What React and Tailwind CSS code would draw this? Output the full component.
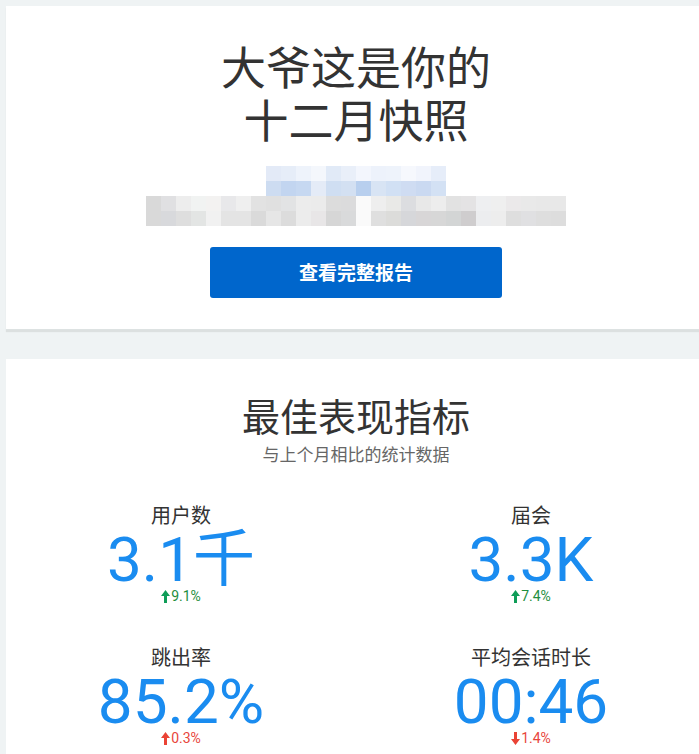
import React from 'react';

const row1a = ['#e3eaf7', '#e6edf8', '#eef3fb', '#f4f7fc', '#e1eaf7', '#e9eff9', '#f3f6fd', '#edf2fb', '#eef3fb', '#f6f8fd', '#f1f4fc', '#e6edf9'];
const row1b = ['#cddcf1', '#c2d5f0', '#c6d8f1', '#e4ebf7', '#cfdef2', '#d3e0f2', '#b8cfee', '#d8e4f4', '#d1e0f4', '#cfdcf2', '#cad9f1', '#d3e1f4'];
const row2a = ['#d9d9d9', '#e0e0e2', '#ededed', '#f1f3f2', '#f3f2f1', '#e8e8ea', '#efefef', '#e2e2e2', '#e0e0e0', '#e2e3e4', '#ececec', '#ebebeb', '#dcdcdc', '#dbdbdc', '#fafafa', '#eeeeee', '#e9e9e7', '#dcdde0', '#e8e8e8', '#ededed', '#e2e2e2', '#e4e3e4', '#eeeff1', '#efefef', '#ebe9ea', '#e9e9e9', '#e8e8e8', '#e8e8e8'];
const row2b = ['#d9d9d9', '#d8d9dc', '#dedede', '#e3e5e4', '#f1f1f1', '#e4e4e4', '#e4e4e4', '#dadada', '#e6e6e6', '#dcdcdc', '#ececec', '#e8e6e7', '#d6d6d6', '#d9dadb', '#fafafa', '#dfdfdf', '#dcdcda', '#d6d7da', '#d8d6d7', '#d7d7d7', '#d3d5d5', '#cfcdce', '#ecedef', '#ededed', '#dedede', '#e0e0e2', '#dedede', '#dddddd'];

const Pixels = ({ colors }) => (
  <div className="flex">
    {colors.map((c, i) => (
      <div key={i} className="w-[15px] h-[15px]" style={{ backgroundColor: c }} />
    ))}
  </div>
);

const Arrow = ({ down, color }) => (
  <svg width="9" height="13" viewBox="0 0 9 13" className="inline-block mr-[1px]">
    {down ? (
      <path d="M3 0h3v7h3L4.5 13 0 7h3z" fill={color} />
    ) : (
      <path d="M4.5 0L9 6H6v7H3V6H0z" fill={color} />
    )}
  </svg>
);

const Metric = ({ label, value, change, up, good }) => {
  const color = good ? '#0f9d58' : '#ea4335';
  const textColor = good ? '#1e8e3e' : '#e8453c';
  return (
    <div className="flex flex-col items-center">
      <div className="text-[20px] leading-[24px] text-[#333]">{label}</div>
      <div className="text-[62px] leading-[56px] text-[#1a8cf0] mt-[5px] font-['Roboto','Noto_Sans_CJK_SC',sans-serif]">
        {value}
      </div>
      <div className="flex items-center text-[14px] leading-[16px] font-['Roboto',sans-serif]" style={{ color: textColor }}>
        <Arrow down={!up} color={color} />
        {change}
      </div>
    </div>
  );
};

export default function App() {
  return (
    <div className="w-full overflow-hidden bg-[#eff3f4] min-h-[754px] font-['Noto_Sans_CJK_SC','Noto_Sans',sans-serif]">
      <div className="pt-[6px] pl-[6px]">
        <div className="w-[700px] bg-white shadow-[0_2px_1px_rgba(0,0,0,0.08)] border-b border-[#dde2e2] flex flex-col items-center pt-[33px] pb-[31px]">
          <h1 className="text-[45px] leading-[53px] text-[#333] text-center">
            大爷这是你的
            <br />
            十二月快照
          </h1>
          <div className="mt-[21px] flex flex-col items-center">
            <div>
              <Pixels colors={row1a} />
              <Pixels colors={row1b} />
            </div>
            <div>
              <Pixels colors={row2a} />
              <Pixels colors={row2b} />
            </div>
          </div>
          <button className="mt-[21px] w-[292px] h-[51px] rounded-[3px] bg-[#0066cc] text-white text-[19px] font-bold">
            查看完整报告
          </button>
        </div>
        <div className="h-[29px]" />
        <div className="w-[700px] bg-white flex flex-col items-center pt-[33px] pb-[20px]">
          <h2 className="text-[38px] leading-[46px] text-[#333]">最佳表现指标</h2>
          <div className="text-[17px] leading-[20px] text-[#666] mt-[6px]">与上个月相比的统计数据</div>
          <div className="grid grid-cols-2 w-full mt-[39px] gap-y-[41px]">
            <Metric label="用户数" value="3.1千" change="9.1%" up good />
            <Metric label="届会" value="3.3K" change="7.4%" up good />
            <Metric label="跳出率" value="85.2%" change="0.3%" up good={false} />
            <Metric label="平均会话时长" value="00:46" change="1.4%" up={false} good={false} />
          </div>
        </div>
      </div>
    </div>
  );
}
